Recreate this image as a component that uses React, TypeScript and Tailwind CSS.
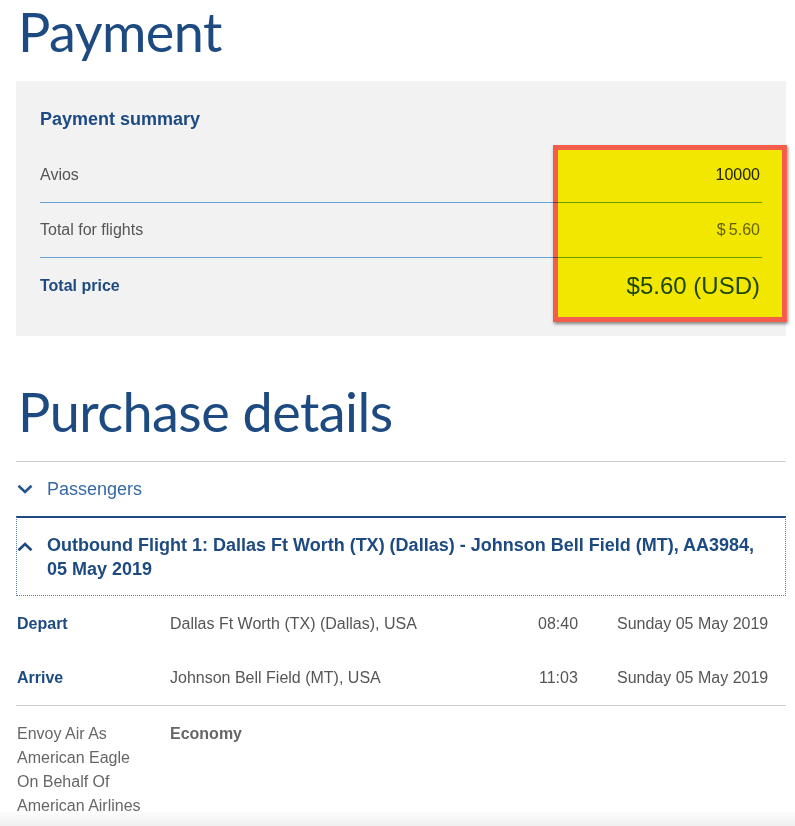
import React from "react";

const HEAD = { fontFamily: 'Lato, "Open Sans", sans-serif' };
const BODY = { fontFamily: '"Liberation Sans", Arial, sans-serif' };

function ChevronDown() {
  return (
    <svg width="16" height="10" viewBox="0 0 16 10" fill="none" stroke="#24548c" strokeWidth="2.6">
      <path d="M1.5 1.8 L8 8 L14.5 1.8" />
    </svg>
  );
}

function ChevronUp() {
  return (
    <svg width="16" height="10" viewBox="0 0 16 10" fill="none" stroke="#1f4a7f" strokeWidth="2.6">
      <path d="M1.5 8.2 L8 2 L14.5 8.2" />
    </svg>
  );
}

export default function App() {
  return (
    <div className="relative w-[795px] h-[826px] overflow-hidden bg-white" style={BODY}>
      <div className="pl-4 w-[786px]">
        {/* Payment heading */}
        <h1 className="text-[54px] leading-[64px] tracking-[-0.01em] text-[#1d4a80] pl-[2px] mb-[17px]" style={HEAD}>
          Payment
        </h1>

        {/* Summary box */}
        <div className="relative bg-[#f2f2f2] px-6 pt-[26px] pb-[23px]">
          <h2 className="text-[18px] leading-6 font-bold text-[#1d4a80] mb-4">Payment summary</h2>
          <div className="flex h-[56px] items-center justify-between border-b border-[#6aa3d8] text-[16px]">
            <span className="text-[#555]">Avios</span>
            <span className="text-[#222] pr-[2px]">10000</span>
          </div>
          <div className="flex h-[55px] items-center justify-between border-b border-[#6aa3d8] text-[16px]">
            <span className="text-[#555]">Total for flights</span>
            <span className="text-[#666] pr-[2px]">$&#8201;5.60</span>
          </div>
          <div className="flex h-[55px] items-center justify-between">
            <span className="text-[16px] font-bold text-[#1d4a80]">Total price</span>
            <span className="text-[24px] text-[#1d4a80] pr-[2px]">$5.60 (USD)</span>
          </div>

          {/* highlight */}
          <div className="absolute left-[537px] top-[64px] w-[234px] h-[177px] bg-[#fff400] border-[5px] border-[#ff6250] mix-blend-multiply shadow-[1px_2px_3px_rgba(0,0,0,0.45)]" />
        </div>

        {/* Purchase details */}
        <h1 className="mt-[44px] text-[54px] leading-[64px] tracking-[-0.01em] text-[#1d4a80] pl-[2px] mb-[17px]" style={HEAD}>
          Purchase details
        </h1>
        <div className="border-t border-[#cfcfcf]">
          <div className="flex h-[54px] items-center gap-[14px] pl-[1px]">
            <ChevronDown />
            <span className="text-[18px] text-[#3669a3]">Passengers</span>
          </div>

          <div className="flex items-start gap-[14px] border border-dotted border-[#5d7fa8] border-t-2 border-t-[#1f4a7f] [border-top-style:solid] pt-[15px] pb-[14px] pr-[20px]">
            <div className="pt-[9px]">
              <ChevronUp />
            </div>
            <span className="text-[18px] leading-6 font-bold text-[#1d4a80]">
              Outbound Flight 1: Dallas Ft Worth (TX) (Dallas) - Johnson Bell Field (MT), AA3984, 05 May 2019
            </span>
          </div>

          <div className="text-[16px]">
            <div className="flex h-[55px] items-center">
              <span className="w-[154px] pl-[1px] font-bold text-[#1d4a80]">Depart</span>
              <span className="w-[368px] text-[#555]">Dallas Ft Worth (TX) (Dallas), USA</span>
              <span className="w-[79px] text-[#555]">08:40</span>
              <span className="text-[#555]">Sunday 05 May 2019</span>
            </div>
            <div className="flex h-[55px] items-center border-b border-[#cfcfcf]">
              <span className="w-[154px] pl-[1px] font-bold text-[#1d4a80]">Arrive</span>
              <span className="w-[369px] text-[#555]">Johnson Bell Field (MT), USA</span>
              <span className="w-[78px] text-[#555]">11:03</span>
              <span className="text-[#555]">Sunday 05 May 2019</span>
            </div>
            <div className="flex pt-[16px] leading-6">
              <span className="w-[154px] pl-[1px] text-[#666]">
                Envoy Air As
                <br />
                American Eagle
                <br />
                On Behalf Of
                <br />
                American Airlines
              </span>
              <span className="font-bold text-[#666]">Economy</span>
            </div>
          </div>
        </div>
      </div>

      {/* bottom fade */}
      <div className="absolute bottom-0 left-0 right-0 h-[16px] bg-gradient-to-b from-transparent to-[#efefef]" />
    </div>
  );
}
